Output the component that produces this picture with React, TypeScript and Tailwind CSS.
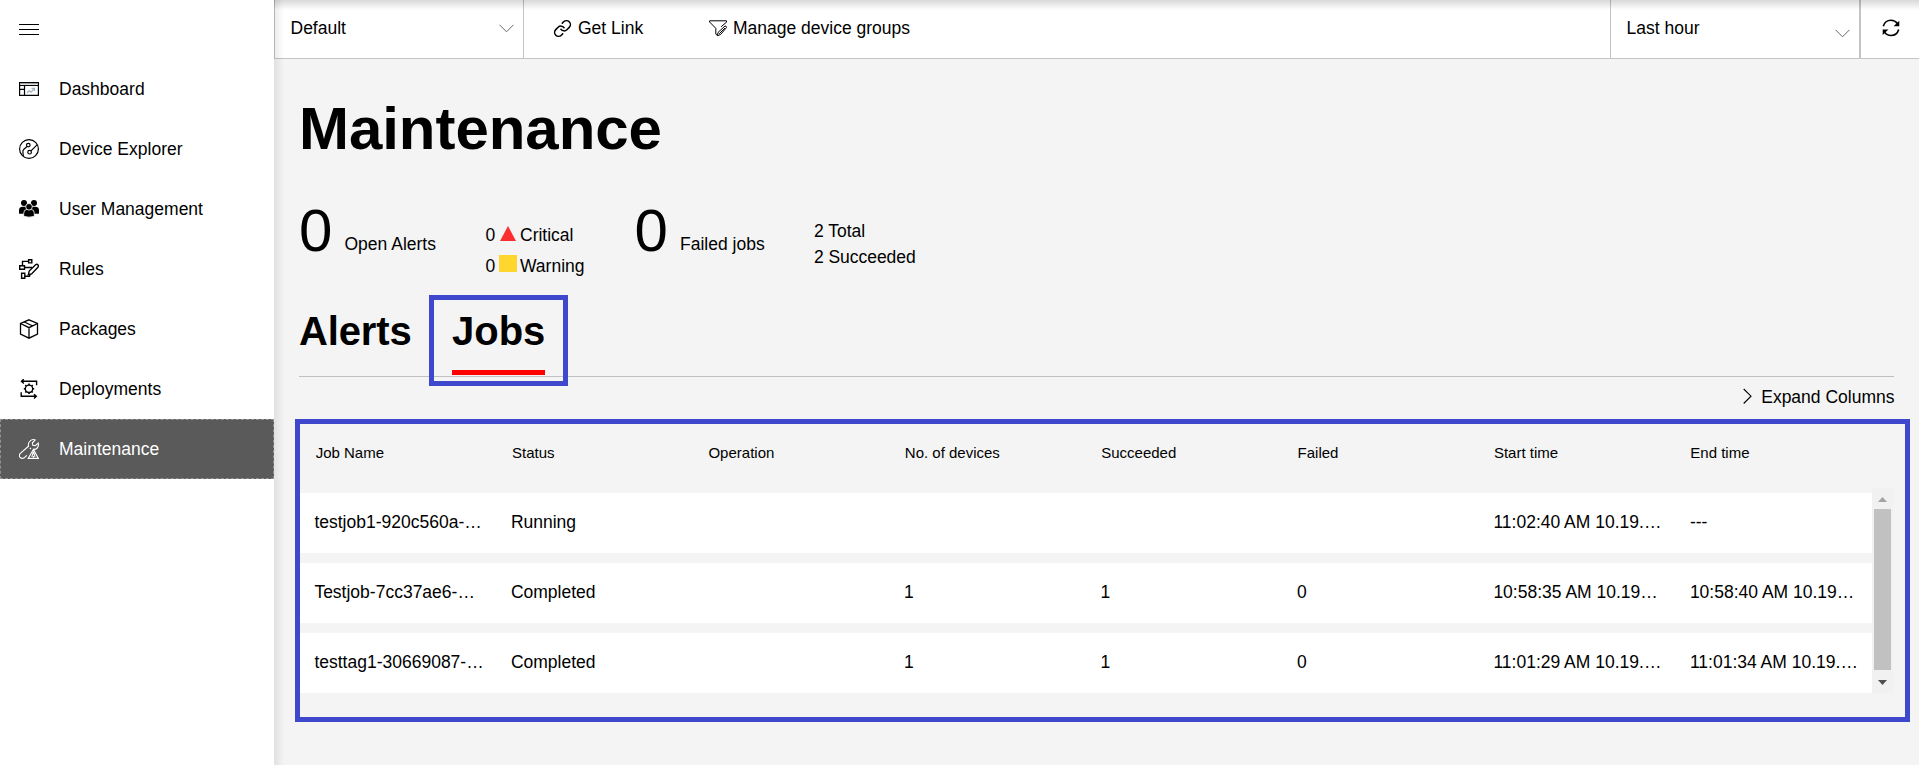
import type { ReactNode } from "react";
import { Link } from "lucide-react";

function Icon({ children, stroke = 1.3 }: { children: ReactNode; stroke?: number }) {
  return (
    <svg
      width="20"
      height="20"
      viewBox="0 0 20 20"
      fill="none"
      stroke="currentColor"
      strokeWidth={stroke}
      className="block shrink-0"
    >
      {children}
    </svg>
  );
}

const MenuIcon = () => (
  <Icon stroke={1}>
    <path d="M0 4.5H20M0 9.5H20M0 14.5H20" />
  </Icon>
);

const DashboardIcon = () => (
  <Icon stroke={1.2}>
    <path d="M.6 3.5H19.4V16.4H.6Z" />
    <path d="M1 4.7H19" stroke="#8f9496" />
    <path d="M1 6.5H19M5.5 7V16M1 10.3H5" />
    <path d="M8 14.2L10 11.7L12 13.2L15.5 9.3M12.5 9.3H15.5V12" stroke="#a3b0ba" />
  </Icon>
);

const ExplorerIcon = () => (
  <Icon stroke={1.2}>
    <circle cx="10" cy="10" r="9.4" />
    <circle cx="9.3" cy="6.1" r="1.8" />
    <circle cx="10.6" cy="13.2" r="1.8" />
    <path d="M8 7.5L4.9 10.2Q3.6 11.3 3.9 13L4.3 17M12 11.8L18 5.8" />
  </Icon>
);

const UsersIcon = () => (
  <Icon stroke={0}>
    <g fill="currentColor">
      <circle cx="5" cy="4" r="3" />
      <circle cx="15" cy="4" r="3" />
      <path d="M0 14.5V11.5Q0 7.8 3.5 7.8H8V14.8H.5ZM20 14.5V11.5Q20 7.8 16.5 7.8H12V14.8H19.5Z" />
    </g>
    <g fill="currentColor" stroke="#fff" strokeWidth=".8">
      <path d="M4.7 17.3V14.3Q4.7 10.4 8 10.4H12Q15.3 10.4 15.3 14.3V17.3Q10 19 4.7 17.3Z" />
      <circle cx="10" cy="7.8" r="3.3" />
    </g>
  </Icon>
);

const RulesIcon = () => (
  <Icon stroke={1.4}>
    <path d="M9.6.7H12.8V3.9H9.6Z M.7 6.8H5.5V10.2H.7Z M2.6 14.3H5.8V19.2H2.6Z" />
    <path d="M3.5 6.8V2.4H9.5M5.5 8.5H13M6 17.3H10.5L11 15" />
    <path d="M9.3 15.8L10.2 12L16.6 5.8Q18 4.8 19 5.9T18.7 8.4L12.6 14.9Z" />
  </Icon>
);

const PackagesIcon = () => (
  <Icon stroke={1.3}>
    <path d="M10 .8L18.5 4.5V15L10 19.2L1.5 15V4.5Z M1.5 4.5L10 8.7L18.5 4.5M10 8.7V19M5.3 3L13.8 7" />
  </Icon>
);

const DeploymentsIcon = () => (
  <Icon stroke={1.4}>
    <path d="M2.2 2.3H17.6V6.2M4.8.2L2.5 2.3L4.8 4.4M2.2 13.2V17.3H17.2M15 15.2L17.3 17.3L15 19.4" />
    <circle cx="10" cy="9.8" r="3.7" />
    <path
      strokeWidth="1.6"
      d="M10 4.6V6M10 13.6V15M4.8 9.8H6.2M13.8 9.8H15.2M6.3 6.1L7.3 7.1M12.7 12.5L13.7 13.5M13.7 6.1L12.7 7.1M7.3 12.5L6.3 13.5"
    />
  </Icon>
);

const MaintenanceIcon = () => (
  <Icon stroke={1.1}>
    <path d="M7.8 16.4L5.2 18.8Q3 20.2 1.2 18.5T1.3 14.4L9.5 7.2Q8.8 3.8 11.2 1.8T16.2 1L13.3 4L13.8 6.3L16.3 6.6L19.2 4Q20 7.2 18.2 9T14.4 10.2" />
    <path d="M14.4 10.3L19.3 19.4H9.2L14.4 10.3ZM14.4 12.5L12.8 17.8M14.4 12.5L16 17.8M14.4 17V18.6M12 8.8L10.8 10" />
  </Icon>
);

const FilterIcon = () => (
  <svg width="18" height="17" viewBox="0 0 18 17" fill="none" stroke="#000" strokeWidth="1" className="block">
    <path d="M8.3 15.5L6.8 14V8.3L.6 2V.8H17.5V2.2L12 6.8" />
    <path d="M8.3 15.7L9.1 12.4L16 6Q17.5 6 17.6 7.5L11.5 14.6ZM10.2 13.8L16 8" />
  </svg>
);

const RefreshIcon = () => (
  <svg width="18" height="18" viewBox="0 0 18 18" fill="none" stroke="#000" strokeWidth="1.6" className="block">
    <path d="M1.3 7.3Q3 1.3 9 1.3Q13 1.3 15.6 4.7M16.7 10.5Q15 16.5 9 16.5Q5 16.5 2.4 13" />
    <path d="M17.3 1.8V7.2H11.6ZM.7 16V10.6H6.4Z" fill="#000" stroke="none" />
  </svg>
);

const ChevronDown = () => (
  <svg width="15" height="9" viewBox="0 0 15 9" fill="none" stroke="#666" strokeWidth="1" className="block">
    <path d="M.5 .8L7.5 7.8L14.5 .8" />
  </svg>
);

const navItems = [
  { label: "Dashboard", icon: DashboardIcon },
  { label: "Device Explorer", icon: ExplorerIcon },
  { label: "User Management", icon: UsersIcon },
  { label: "Rules", icon: RulesIcon },
  { label: "Packages", icon: PackagesIcon },
  { label: "Deployments", icon: DeploymentsIcon },
  { label: "Maintenance", icon: MaintenanceIcon, active: true },
];

const columns = [
  "Job Name",
  "Status",
  "Operation",
  "No. of devices",
  "Succeeded",
  "Failed",
  "Start time",
  "End time",
];

const jobs = [
  ["testjob1-920c560a-…", "Running", "", "", "", "", "11:02:40 AM 10.19.…", "---"],
  ["Testjob-7cc37ae6-…", "Completed", "", "1", "1", "0", "10:58:35 AM 10.19…", "10:58:40 AM 10.19…"],
  ["testtag1-30669087-…", "Completed", "", "1", "1", "0", "11:01:29 AM 10.19.…", "11:01:34 AM 10.19.…"],
];

function Sidebar() {
  return (
    <nav className="w-[274px] shrink-0 bg-white">
      <div className="flex h-[59px] items-center pl-[19px]">
        <MenuIcon />
      </div>
      {navItems.map(({ label, icon: ItemIcon, active }) => (
        <div
          key={label}
          className={
            active
              ? "flex h-[60px] items-center gap-5 bg-[#5a5a5a] pl-[19px] text-white outline-1 -outline-offset-1 outline-dashed outline-[#929292]"
              : "flex h-[60px] items-center gap-5 pl-[19px]"
          }
        >
          <ItemIcon />
          <span>{label}</span>
        </div>
      ))}
    </nav>
  );
}

function TopBar() {
  return (
    <header className="flex h-[59px] border-b border-[#c4c4c4] bg-white leading-[56px]">
      <div className="flex w-[250px] justify-between border-x border-[#c4c4c4] pr-[9px] pl-[15.5px]">
        <span>Default</span>
        <span className="pt-6">
          <ChevronDown />
        </span>
      </div>
      <div className="flex w-[155px] gap-1.5 pl-[29px]">
        <Link size={19} strokeWidth={1.9} className="mt-[19px]" />
        <span>Get Link</span>
      </div>
      <div className="flex gap-1.5 pl-[30px]">
        <span className="pt-5">
          <FilterIcon />
        </span>
        <span>Manage device groups</span>
      </div>
      <div className="ml-auto flex w-[251px] justify-between border-r-2 border-l border-[#c4c4c4] pr-[9px] pl-[15.5px]">
        <span>Last hour</span>
        <span className="pt-[29px]">
          <ChevronDown />
        </span>
      </div>
      <div className="w-[58px] pt-[19px] pl-[21px]">
        <RefreshIcon />
      </div>
    </header>
  );
}

function Stats() {
  return (
    <div className="mt-[42px] flex h-[110px] leading-[26px]">
      <div className="w-[45.5px] text-[60px] leading-[60px]">0</div>
      <div className="w-[141px] pt-[30px]">Open Alerts</div>
      <div className="flex w-[149px] flex-col gap-[5px] pt-[21px]">
        <div className="flex">
          <span className="w-[14.5px]">0</span>
          <svg width="16" height="15" viewBox="0 0 16 15" className="mt-1 mr-1">
            <path d="M8 0L16 15H0Z" fill="#fc2d2d" />
          </svg>
          <span>Critical</span>
        </div>
        <div className="flex">
          <span className="w-[13.5px]">0</span>
          <span className="mt-0.5 mr-[3px] h-[17px] w-[18px] bg-[#ffd62e]" />
          <span>Warning</span>
        </div>
      </div>
      <div className="w-[45.5px] text-[60px] leading-[60px]">0</div>
      <div className="w-[134px] pt-[30px]">Failed jobs</div>
      <div className="pt-[17px]">
        <div>2 Total</div>
        <div className="-tracking-[0.05px]">2 Succeeded</div>
      </div>
    </div>
  );
}

function Tabs() {
  return (
    <div className="mr-[25px] flex h-[66px] border-b border-[#c0c0c0] text-[40px] leading-[40px] font-bold">
      <div className="w-[153px] -tracking-[0.15px]">Alerts</div>
      <div className="relative h-16 border-b-5 border-[#ff0000]">
        Jobs
        <div className="absolute -top-4 -left-[23px] h-[91px] w-[139px] border-5 border-[#3f48cc]" />
      </div>
    </div>
  );
}

function ScrollBar() {
  return (
    <div className="flex h-[205px] w-[21px] flex-col items-center bg-[#f1f1f1]">
      <svg width="9" height="21" viewBox="0 0 9 21" className="block">
        <path d="M0 14L4.5 9L9 14Z" fill="#a3a3a3" />
      </svg>
      <div className="h-[161px] w-[17px] bg-[#c1c1c1]" />
      <svg width="9" height="23" viewBox="0 0 9 23" className="block">
        <path d="M0 10L4.5 15L9 10Z" fill="#505050" />
      </svg>
    </div>
  );
}

function JobsTable() {
  return (
    <div className="mt-[9px] -ml-1 h-[303px] w-[1615px] border-5 border-[#3f48cc]">
      <div className="grid h-16 w-[1571px] grid-cols-8 pt-[19px] text-[15px] leading-5">
        {columns.map((column) => (
          <div key={column} className="pl-[15.7px]">
            {column}
          </div>
        ))}
      </div>
      <div className="flex">
        <div className="flex w-[1572px] flex-col gap-2.5 pt-[5px]">
          {jobs.map((job) => (
            <div key={job[0]} className="grid h-[60px] grid-cols-8 bg-white leading-[58px]">
              {job.map((value, i) => (
                <div key={columns[i]} className="overflow-hidden pl-[14.4px] whitespace-nowrap">
                  {value}
                </div>
              ))}
            </div>
          ))}
        </div>
        <ScrollBar />
      </div>
    </div>
  );
}

export default function App() {
  return (
    <div className="flex h-[765px] w-[1925px] overflow-hidden bg-white font-['Liberation_Sans',Arial,sans-serif] text-[17.5px] text-black">
      <Sidebar />
      <main className="relative w-[1645px] bg-[#f4f4f4]">
        <TopBar />
        <div className="pt-10 pl-[25px]">
          <h1 className="text-[60px] leading-[60px] font-bold -tracking-[0.05px]">Maintenance</h1>
          <Stats />
          <Tabs />
          <div className="mt-[7px] mr-[24.5px] flex justify-end gap-[9px] leading-[26px]">
            <svg width="9" height="17" viewBox="0 0 9 17" fill="none" stroke="#000" strokeWidth="1.1" className="mt-1">
              <path d="M.7 1L8 8.2L.7 15.5" />
            </svg>
            <span>Expand Columns</span>
          </div>
          <JobsTable />
        </div>
        <div className="pointer-events-none absolute inset-x-0 top-0 h-2.5 bg-linear-to-b from-black/15 to-transparent" />
        <div className="pointer-events-none absolute inset-y-0 left-0 w-2.5 bg-linear-to-r from-black/8 to-transparent" />
      </main>
    </div>
  );
}
